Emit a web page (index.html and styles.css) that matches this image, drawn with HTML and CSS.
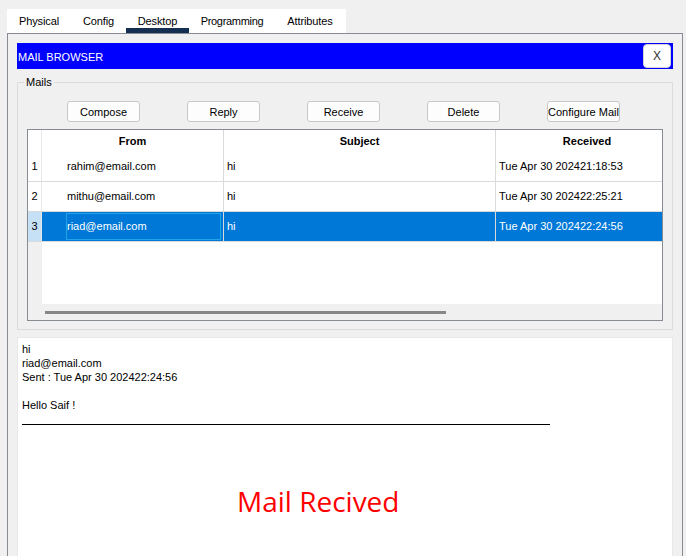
FILE: index.html
```html
<!DOCTYPE html>
<html>
<head>
<meta charset="utf-8">
<link rel="stylesheet" href="styles.css">
</head>
<body>
<div class="tabs">
  <div class="tab t1">Physical</div>
  <div class="tab t2">Config</div>
  <div class="tab t3 active">Desktop</div>
  <div class="tab t4">Programming</div>
  <div class="tab t5">Attributes</div>
</div>
<div class="panel">
  <div class="titlebar">
    <span class="title">MAIL BROWSER</span>
    <div class="close">X</div>
  </div>
  <fieldset class="mails">
    <legend>Mails</legend>
    <div class="mails-inner">
      <div class="btnrow">
        <div class="btn">Compose</div>
        <div class="btn">Reply</div>
        <div class="btn">Receive</div>
        <div class="btn">Delete</div>
        <div class="btn">Configure Mail</div>
      </div>
      <div class="grid">
        <div class="grid-body">
          <div class="row head">
            <div class="c num"></div>
            <div class="c from">From</div>
            <div class="c subj">Subject</div>
            <div class="c recv">Received</div>
          </div>
          <div class="row">
            <div class="c num">1</div>
            <div class="c from"><span class="ftxt">rahim@email.com</span></div>
            <div class="c subj">hi</div>
            <div class="c recv">Tue Apr 30 202421:18:53</div>
          </div>
          <div class="row">
            <div class="c num">2</div>
            <div class="c from"><span class="ftxt">mithu@email.com</span></div>
            <div class="c subj">hi</div>
            <div class="c recv">Tue Apr 30 202422:25:21</div>
          </div>
          <div class="row sel">
            <div class="c num">3</div>
            <div class="c from"><span class="ftxt focus">riad@email.com</span></div>
            <div class="c subj">hi</div>
            <div class="c recv">Tue Apr 30 202422:24:56</div>
          </div>
          <div class="row empty">
            <div class="c num"></div>
            <div class="c fill"></div>
          </div>
        </div>
        <div class="hscroll"><div class="thumb"></div></div>
      </div>
    </div>
  </fieldset>
  <div class="message">
    <div class="line">hi</div>
    <div class="line">riad@email.com</div>
    <div class="line">Sent : Tue Apr 30 202422:24:56</div>
    <div class="line">&nbsp;</div>
    <div class="line">Hello Saif !</div>
    <div class="rule"></div>
    <div class="notice">Mail Recived</div>
  </div>
</div>
</body>
</html>
```
FILE: styles.css
```css
html, body {
  margin: 0;
  padding: 0;
}
body {
  background: #f0f0f0;
  font-family: "Liberation Sans", Arial, sans-serif;
  font-size: 11px;
  color: #000;
  height: 556px;
  overflow: hidden;
}
.tabs {
  display: flex;
  margin: 9px 0 0 7px;
  width: 339px;
  height: 24px;
  background: #fff;
}
.tab {
  line-height: 24px;
  height: 24px;
  box-sizing: border-box;
  text-align: center;
  white-space: nowrap;
  letter-spacing: -0.1px;
}
.t1 { width: 64px; }
.t2 { width: 55px; }
.t3 { width: 63px; }
.t4 { width: 86px; letter-spacing: -0.3px; }
.t5 { width: 70px; }
.tab.active {
  box-shadow: inset 0 -5px 0 #142f52;
}
.panel {
  margin-left: 7px;
  width: 676px;
  height: 540px;
  box-sizing: border-box;
  border: 1px solid #878b92;
  padding: 9px 9px 0;
}
.titlebar {
  height: 26px;
  background: #0000ff;
  color: #fff;
  display: flex;
  align-items: center;
  justify-content: space-between;
  padding: 0 2px 0 1px;
}
.title {
  padding-top: 2px;
}
.close {
  width: 28px;
  height: 24px;
  box-sizing: border-box;
  background: #fff;
  border: 1px solid #d4d4d4;
  border-radius: 4px;
  display: flex;
  align-items: center;
  justify-content: center;
  font-size: 12px;
  color: #333;
}
.mails {
  margin: 7px 0 0;
  padding: 0;
  border: 1px solid #dcdcdc;
  min-width: 0;
}
.mails legend {
  margin-left: 6px;
  padding: 0 2px;
  line-height: 13px;
  font-size: 11px;
}
.mails-inner {
  padding: 12px 9px 8px;
}
.btnrow {
  display: flex;
  gap: 47px;
  padding-left: 40px;
}
.btn {
  width: 73px;
  height: 21px;
  box-sizing: border-box;
  border: 1px solid #c8c8c8;
  border-radius: 3px;
  background: #fdfdfd;
  display: flex;
  align-items: center;
  justify-content: center;
}
.grid {
  margin-top: 7px;
  height: 192px;
  box-sizing: border-box;
  border: 1px solid #878b92;
  overflow: hidden;
  display: flex;
  flex-direction: column;
  background: #fff;
}
.grid-body {
  flex: 1;
  display: flex;
  flex-direction: column;
}
.row {
  display: flex;
  height: 30px;
  box-sizing: border-box;
  border-bottom: 1px solid #dadada;
  flex: none;
}
.row.head {
  height: 22px;
  border-bottom: none;
  font-weight: bold;
}
.c {
  flex: none;
  box-sizing: border-box;
  display: flex;
  align-items: center;
  border-right: 1px solid #dadada;
}
.row:not(.head) .c {
  padding-bottom: 1px;
}
.row:not(.head) .c.from {
  padding-bottom: 0;
}
.num {
  width: 14px;
  justify-content: center;
  border-right-color: #e6e6e6;
}
.from {
  width: 182px;
  padding-left: 24px;
}
.subj {
  width: 272px;
  padding-left: 3px;
}
.recv {
  width: 182px;
  padding-left: 3px;
  border-right: none;
}
.head .c {
  justify-content: center;
  padding-left: 0;
}
.ftxt {
  display: flex;
  align-items: center;
  height: 27px;
  width: 155px;
  box-sizing: border-box;
  padding-bottom: 1px;
  border: 1px solid transparent;
}
.ftxt.focus {
  border-color: #1ea3e6;
}
.row.sel {
  background: #0078d7;
  color: #fff;
  border-bottom-color: #dadada;
}
.row.sel .num {
  background: #c6e0f6;
  color: #000;
}
.row.empty {
  flex: 1;
  border-bottom: none;
}
.row.empty .num {
  background: #f0f0f0;
  border-right: none;
}
.row.empty .fill {
  flex: 1;
  border-right: none;
}
.hscroll {
  height: 16px;
  background: #f0f0f0;
  flex: none;
  padding: 7px 0 0 17px;
  box-sizing: border-box;
}
.thumb {
  width: 401px;
  height: 3px;
  background: #878787;
}
.message {
  margin-top: 7px;
  height: 240px;
  box-sizing: border-box;
  border: 1px solid #e8e8e8;
  background: #fff;
  padding: 4px 4px 0;
}
.line {
  line-height: 14px;
  height: 14px;
}
.rule {
  margin-top: 12px;
  width: 528px;
  border-top: 1px solid #000;
}
.notice {
  margin: 57px 0 0 215px;
  font-family: "Open Sans", sans-serif;
  font-size: 28px;
  color: #ff0000;
  line-height: normal;
}
```
